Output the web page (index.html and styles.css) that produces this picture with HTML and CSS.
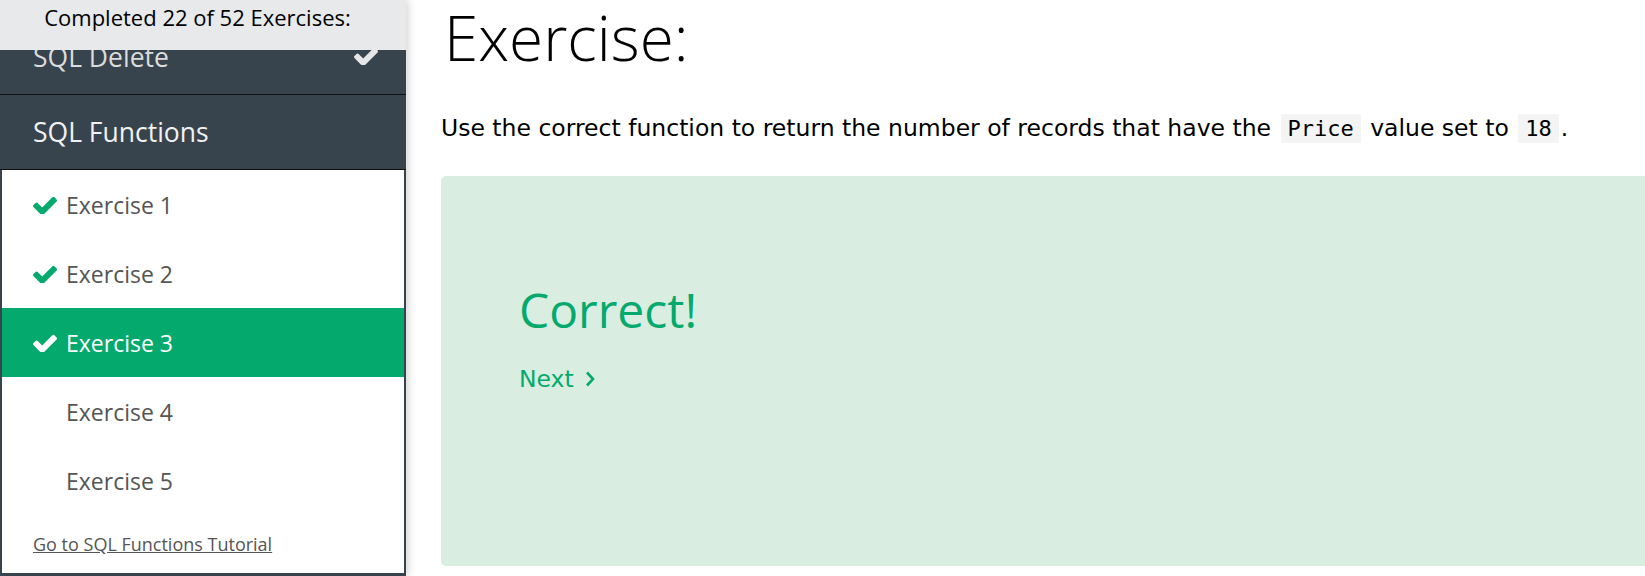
FILE: index.html
```html
<!DOCTYPE html>
<html lang="en">
<head>
<meta charset="utf-8">
<title>SQL Functions Exercise</title>
<link rel="stylesheet" href="styles.css">
</head>
<body>
<div class="page">
  <aside class="sidebar">
    <div class="progress">Completed 22 of 52 Exercises:</div>
    <div class="menu">
      <div class="chapter chapter-done">
        <span>SQL Delete</span>
        <svg class="chk chk-light" viewBox="121 290 1550 1140"><path d="M1671 566q0 40-28 68l-724 724-136 136q-28 28-68 28t-68-28l-136-136-362-362q-28-28-28-68t28-68l136-136q28-28 68-28t68 28l294 295 656-657q28-28 68-28t68 28l136 136q28 28 28 68z"/></svg>
      </div>
      <div class="chapter chapter-open">SQL Functions</div>
      <div class="exercises">
        <a class="ex">
          <svg class="chk chk-green" viewBox="121 290 1550 1140"><path d="M1671 566q0 40-28 68l-724 724-136 136q-28 28-68 28t-68-28l-136-136-362-362q-28-28-28-68t28-68l136-136q28-28 68-28t68 28l294 295 656-657q28-28 68-28t68 28l136 136q28 28 28 68z"/></svg>
          <span>Exercise 1</span>
        </a>
        <a class="ex">
          <svg class="chk chk-green" viewBox="121 290 1550 1140"><path d="M1671 566q0 40-28 68l-724 724-136 136q-28 28-68 28t-68-28l-136-136-362-362q-28-28-28-68t28-68l136-136q28-28 68-28t68 28l294 295 656-657q28-28 68-28t68 28l136 136q28 28 28 68z"/></svg>
          <span>Exercise 2</span>
        </a>
        <a class="ex ex-active">
          <svg class="chk chk-white" viewBox="121 290 1550 1140"><path d="M1671 566q0 40-28 68l-724 724-136 136q-28 28-68 28t-68-28l-136-136-362-362q-28-28-28-68t28-68l136-136q28-28 68-28t68 28l294 295 656-657q28-28 68-28t68 28l136 136q28 28 28 68z"/></svg>
          <span>Exercise 3</span>
        </a>
        <a class="ex">
          <span class="chk-space"></span>
          <span>Exercise 4</span>
        </a>
        <a class="ex">
          <span class="chk-space"></span>
          <span>Exercise 5</span>
        </a>
        <div class="tutorial"><a class="tutorial-link">Go to SQL Functions Tutorial</a></div>
      </div>
    </div>
  </aside>
  <main class="content">
    <h1 class="title">Exercise:</h1>
    <p class="task">Use the correct function to return the number of records that have the <code>Price</code> value set to <code>18</code>.</p>
    <div class="result">
      <div class="correct">Correct!</div>
      <a class="next">Next <svg class="chev" viewBox="0 0 10 16"><path d="M2 1.5 L8 8 L2 14.5" fill="none" stroke="currentColor" stroke-width="2.6"/></svg></a>
    </div>
  </main>
</div>
</body>
</html>
```

FILE: styles.css
```css
html, body {
  margin: 0;
  padding: 0;
  background: #fff;
}
body {
  font-family: "Open Sans", "Noto Sans", sans-serif;
  overflow: hidden;
}
.page {
  display: flex;
  height: 576px;
  width: 1645px;
}
.sidebar {
  width: 406px;
  flex: none;
  display: flex;
  flex-direction: column;
  box-shadow: 2px 0 8px rgba(0, 0, 0, 0.18);
  position: relative;
  z-index: 1;
}
.progress {
  height: 50px;
  background: #e7e9eb;
  text-align: center;
  font-size: 22px;
  line-height: 35px;
  padding-right: 11px;
  color: #000;
  flex: none;
}
.menu {
  flex: 1;
  background: #38444d;
  overflow: hidden;
  display: flex;
  flex-direction: column;
}
.chapter {
  flex: none;
  height: 74px;
  border-bottom: 1px solid #111;
  display: flex;
  align-items: center;
  justify-content: space-between;
  padding: 0 28px 0 33px;
  font-size: 26.5px;
  color: #f1f1f1;
}
.chapter-done {
  margin-top: -30px;
  color: #dcdcdc;
}
.chapter-done .chk {
  margin-top: -2px;
}
.exercises {
  flex: 1;
  background: #fff;
  margin: 0 2px 3px 2px;
  display: flex;
  flex-direction: column;
}
.ex {
  height: 69px;
  flex: none;
  display: flex;
  align-items: center;
  gap: 9px;
  padding-left: 31px;
  font-size: 23px;
  color: #555;
}
.ex-active {
  background: #04aa6d;
  color: #fff;
}
.chk {
  width: 24px;
  height: 18px;
  flex: none;
}
.chk-space {
  width: 24px;
  flex: none;
}
.chk-green { fill: #04aa6d; }
.chk-white { fill: #fff; }
.chk-light { fill: #e6e6e6; }
.tutorial {
  flex: 1;
  display: flex;
  align-items: center;
  padding-left: 31px;
}
.tutorial-link {
  font-size: 18px;
  color: #555;
  text-decoration: underline;
}
.content {
  flex: 1;
  padding-left: 35px;
  min-width: 0;
}
.title {
  margin: 0;
  font-weight: 300;
  font-size: 62px;
  line-height: 70px;
  padding: 2px 0 0 3px;
  color: #000;
}
.task {
  margin: 41px 0 0 0;
  font-family: "DejaVu Sans", Verdana, sans-serif;
  font-size: 23.5px;
  line-height: 30px;
  color: #000;
}
.task code {
  font-family: "DejaVu Sans Mono", "Liberation Mono", monospace;
  font-size: 22px;
  background: #f4f4f4;
  padding: 2px 7px;
  margin: 0 2px;
}
.result {
  margin-top: 32px;
  height: 390px;
  background: #d9eee1;
  border-radius: 5px;
  padding: 104px 0 0 78px;
  box-sizing: border-box;
  margin-right: -20px;
}
.correct {
  font-size: 48px;
  line-height: 60px;
  color: #04aa6d;
}
.next {
  display: inline-flex;
  align-items: center;
  gap: 11px;
  margin-top: 25px;
  font-family: "DejaVu Sans", Verdana, sans-serif;
  font-size: 23.5px;
  color: #04aa6d;
}
.chev {
  width: 10px;
  height: 16px;
}
```
